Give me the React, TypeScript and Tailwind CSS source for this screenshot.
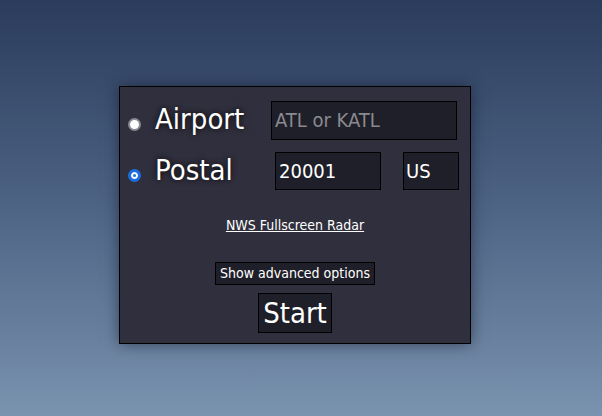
import React from "react"

const font = { fontFamily: '"DejaVu Sans", sans-serif' }

const radio =
  "appearance-none ml-[8px] mt-[9px] w-[13px] h-[13px] rounded-full border-2 border-[#8a8a92] bg-white checked:border-[3px] checked:border-[#1a6ee0] checked:bg-[#1a6ee0] checked:shadow-[inset_0_0_0_2px_white]"

export default function App() {
  return (
    <div
      className="w-[602px] h-[416px] bg-gradient-to-b from-[#2b3c5c] via-[#4e6485] to-[#7a93af] flex justify-center pt-[86px] pr-[12px]"
      style={font}
    >
      <div className="w-[352px] h-[258px] bg-[#302f3d] border border-black shadow-[0_0_14px_rgba(20,25,40,0.6)] flex flex-col">
        <div className="flex items-center h-[53px] pt-[13px]">
          <input type="radio" name="mode" className={radio} />
          <span className="ml-[14px] w-[116px] text-[29px] text-white font-stretch-condensed [text-shadow:0_0_6px_#000]">
            Airport
          </span>
          <input
            placeholder="ATL or KATL"
            className="w-[186px] h-[39px] bg-[#1f1f29] border border-black px-[3px] text-[20px] text-white placeholder:text-[#8a8a90] font-stretch-condensed outline-none"
          />
        </div>
        <div className="flex items-center h-[50px] pt-[11px]">
          <input type="radio" name="mode" defaultChecked className={radio} />
          <span className="ml-[14px] w-[120px] text-[29px] text-white font-stretch-condensed [text-shadow:0_0_6px_#000]">
            Postal
          </span>
          <input
            defaultValue="20001"
            className="w-[106px] h-[38px] bg-[#1f1f29] border border-black px-[3px] text-[20px] text-white font-stretch-condensed outline-none"
          />
          <input
            defaultValue="US"
            className="ml-[22px] w-[56px] h-[38px] bg-[#1f1f29] border border-black px-[2px] text-[20px] text-white font-stretch-condensed outline-none"
          />
        </div>
        <div className="flex justify-center mt-[25px]">
          <a href="#" className="text-[14px] text-white underline font-stretch-condensed">
            NWS Fullscreen Radar
          </a>
        </div>
        <div className="flex justify-center mt-[26px]">
          <button className="h-[23px] px-[4px] bg-[#1f1f29] border border-black text-[14px] text-white font-stretch-condensed">
            Show advanced options
          </button>
        </div>
        <div className="flex justify-center mt-[8px]">
          <button className="h-[40px] px-[4px] bg-[#1f1f29] border border-black text-[29px] text-white font-stretch-condensed leading-none">
            Start
          </button>
        </div>
      </div>
    </div>
  )
}
